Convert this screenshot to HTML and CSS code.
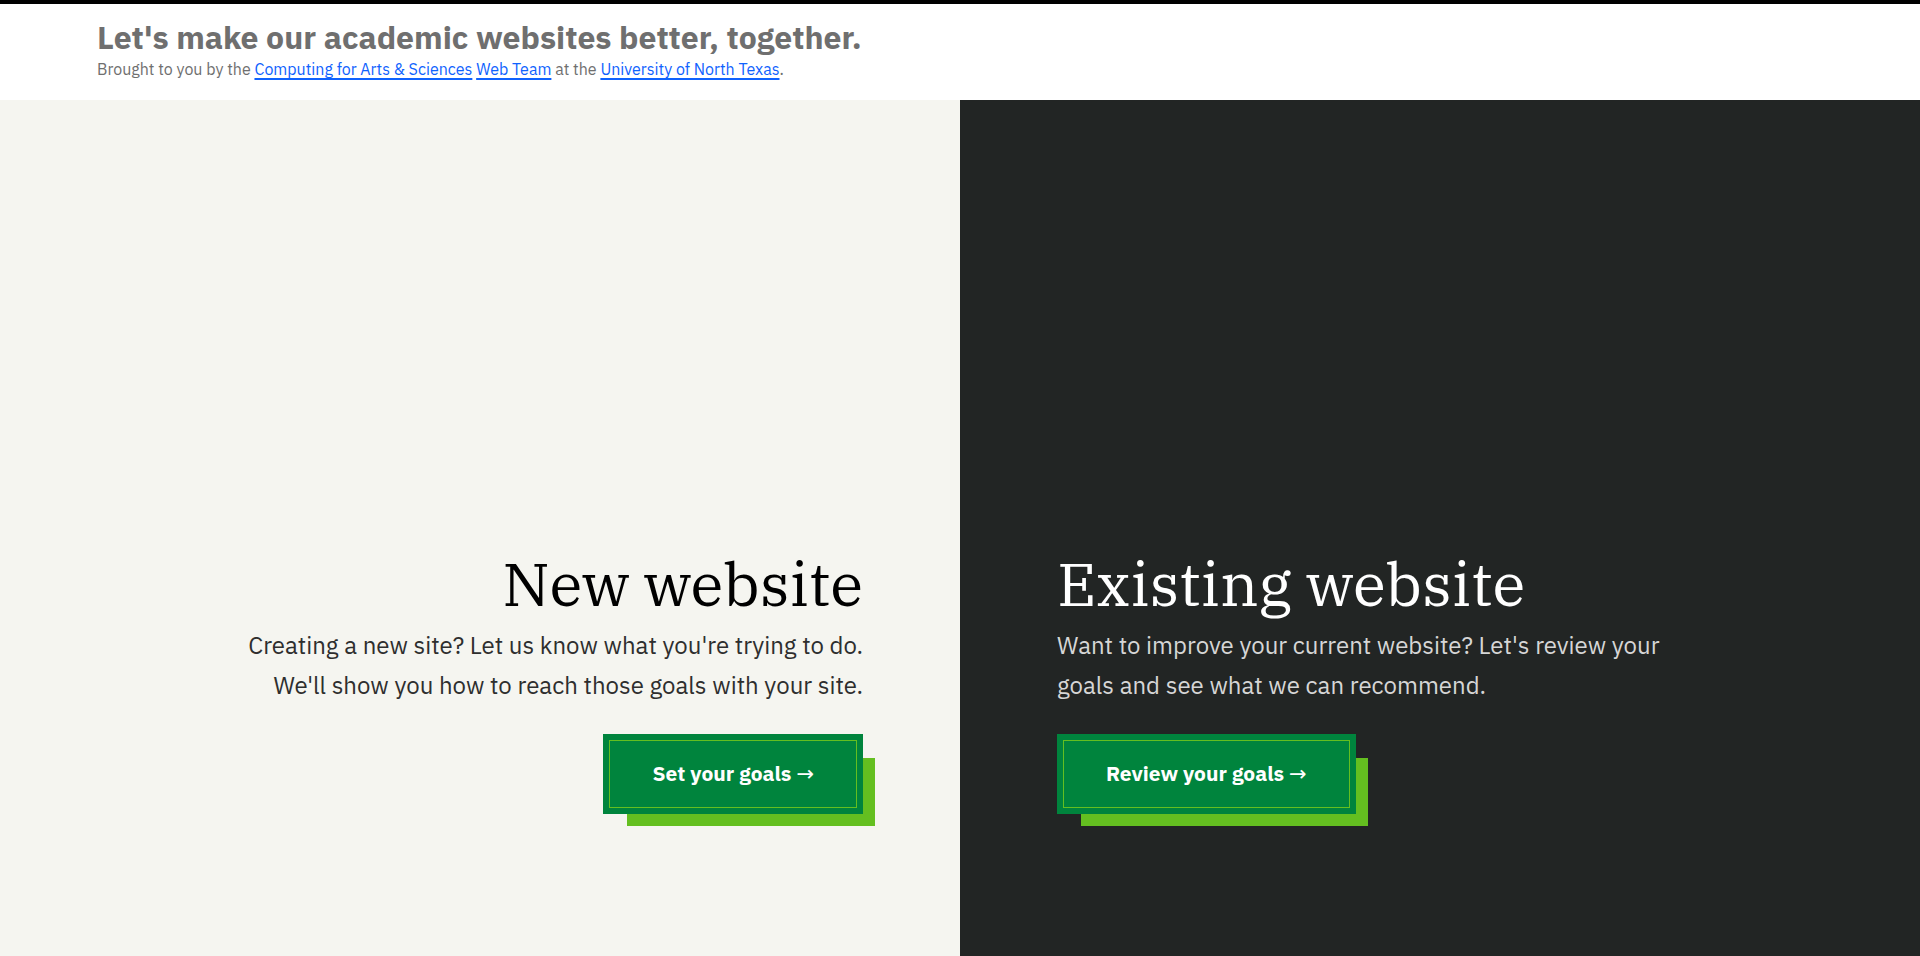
FILE: index.html
```html
<!DOCTYPE html>
<html lang="en">
<head>
<meta charset="utf-8">
<title>Let's make our academic websites better, together.</title>
<link rel="stylesheet" href="styles.css">
</head>
<body>
<header class="site-header">
  <h1 class="site-title">Let's make our academic websites better, together.</h1>
  <p class="site-credit">Brought to you by the <a href="#">Computing for Arts &amp; Sciences</a> <a href="#">Web Team</a> at the <a href="#">University of North Texas</a>.</p>
</header>
<main class="choices">
  <section class="choice choice-new">
    <div class="choice-inner">
      <h2 class="choice-title">New website</h2>
      <p class="choice-text">Creating a new site? Let us know what you're trying to do. We'll show you how to reach those goals with your site.</p>
      <a class="btn" href="#">Set your goals <span class="arrow">→</span></a>
    </div>
  </section>
  <section class="choice choice-existing">
    <div class="choice-inner">
      <h2 class="choice-title">Existing website</h2>
      <p class="choice-text">Want to improve your current website? Let's review your goals and see what we can recommend.</p>
      <a class="btn" href="#">Review your goals <span class="arrow">→</span></a>
    </div>
  </section>
</main>
</body>
</html>
```
FILE: styles.css
```css
html, body {
  margin: 0;
  padding: 0;
}
body {
  font-family: "IBM Plex Sans", Roboto, "Liberation Sans", sans-serif;
  border-top: 4px solid #000;
  background: #fff;
}
.site-header {
  height: 96px;
  box-sizing: border-box;
  padding: 14px 97px 0;
  background: #fff;
}
.site-title {
  margin: 0;
  font-size: 32px;
  line-height: 38px;
  font-weight: 700;
  color: #6f6f6f;
}
.site-credit {
  margin: 2px 0 0;
  font-size: 16px;
  line-height: 22px;
  color: #6f6f6f;
}
.site-credit a {
  color: #0f62fe;
  text-decoration: underline;
  text-decoration-thickness: 2px;
  text-underline-offset: 3px;
}
.choices {
  display: grid;
  grid-template-columns: 1fr 1fr;
  height: 856px;
}
.choice {
  display: flex;
  flex-direction: column;
  justify-content: flex-end;
  padding: 0 97px 142px;
}
.choice-new {
  background: #f5f5f0;
  align-items: flex-end;
  text-align: right;
}
.choice-existing {
  background: #222524;
  align-items: flex-start;
  text-align: left;
}
.choice-inner {
  max-width: 640px;
  display: flex;
  flex-direction: column;
}
.choice-new .choice-inner { align-items: flex-end; }
.choice-existing .choice-inner { align-items: flex-start; }
.choice-title {
  margin: 0;
  font-family: "IBM Plex Serif", "Liberation Serif", serif;
  font-weight: 400;
  font-size: 61px;
  line-height: 77px;
}
.choice-new .choice-title { color: #000; }
.choice-existing .choice-title { color: #fff; }
.choice-text {
  margin: 3px 0 29px;
  font-size: 24px;
  line-height: 40px;
}
.choice-new .choice-text { color: #2e2e2e; }
.choice-existing .choice-text { color: #d6d6d6; }
.btn {
  display: inline-block;
  background: #00843d;
  color: #fff;
  font-weight: 700;
  font-size: 21px;
  line-height: 27px;
  padding: 26px 49px;
  text-decoration: none;
  outline: 1px solid #64bf20;
  outline-offset: -7px;
  box-shadow: 18px 18px 0 -6px #64bf20;
}
.arrow {
  font-family: "DejaVu Sans", sans-serif;
  font-weight: 400;
}
```
